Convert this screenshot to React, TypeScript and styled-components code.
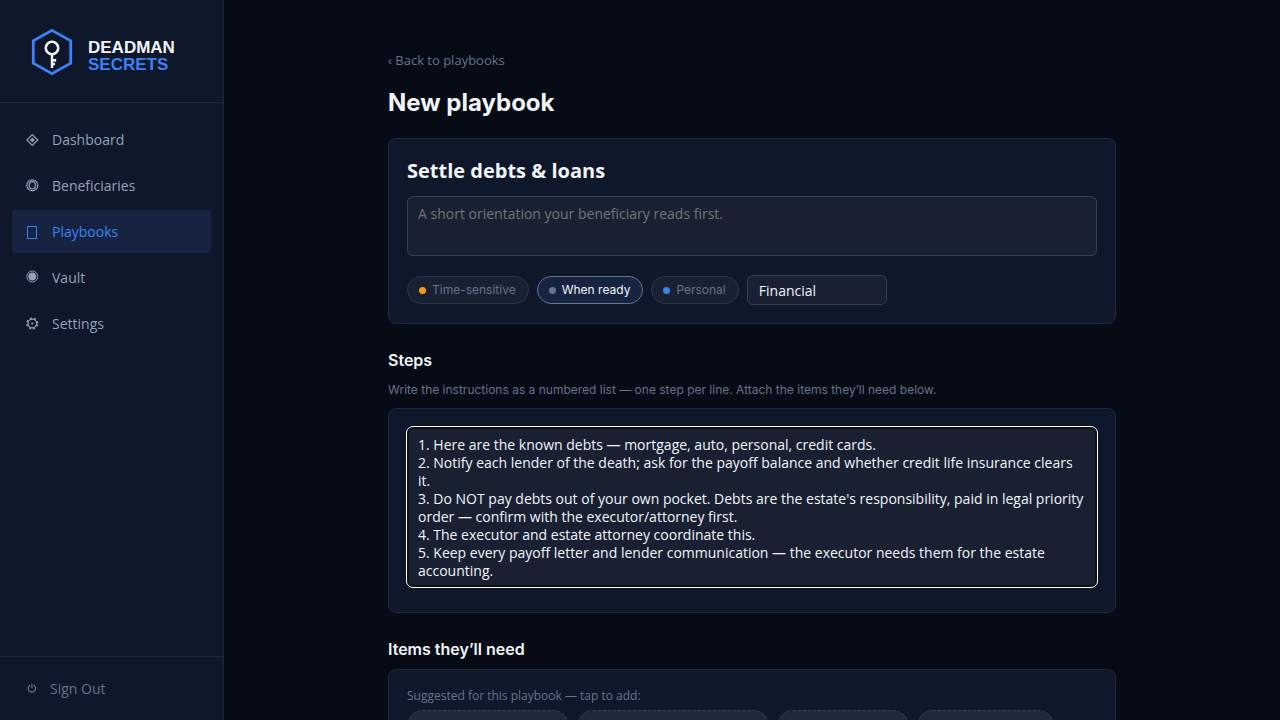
import React, { useState } from "react";
import styled, { createGlobalStyle } from "styled-components";

const color = {
  page: "#070b15",
  panel: "#0f172a",
  field: "#182032",
  line: "#1e293b",
  fieldLine: "#334155",
  text: "#f1f5f9",
  soft: "#94a3b8",
  muted: "#64748b",
  accent: "#3b82f6",
  active: "#162442",
};

const textFont = `"Open Sans", "Noto Sans", sans-serif`;
const uiFont = `Inter, "Open Sans", sans-serif`;

const GlobalStyle = createGlobalStyle`
  *, *::before, *::after { box-sizing: border-box; }
  body {
    margin: 0;
    background: ${color.page};
    color: ${color.text};
    font: 14px/18px ${textFont};
  }
  button, input, textarea { font: inherit; color: inherit; }
`;

const Shell = styled.div`
  display: grid;
  grid-template-columns: 224px minmax(0, 1fr);
  min-height: 100vh;
`;

const Sidebar = styled.aside`
  position: sticky;
  top: 0;
  display: flex;
  flex-direction: column;
  height: 100vh;
  background: ${color.panel};
  border-right: 1px solid ${color.line};
`;

const Brand = styled.a`
  display: flex;
  align-items: center;
  gap: 12px;
  padding: 25px 28px 23px;
  height: 103px;
  border-bottom: 1px solid ${color.line};
  text-decoration: none;
`;

const BrandName = styled.span`
  display: flex;
  flex-direction: column;
  padding-top: 7px;
  font: bold 17px/17px "Liberation Sans", Arial, sans-serif;
  color: ${color.text};
`;

const BrandAccent = styled.span`
  color: ${color.accent};
`;

const Nav = styled.nav`
  display: flex;
  flex: 1;
  flex-direction: column;
  gap: 3px;
  padding: 15px 12px;
`;

const NavLink = styled.a<{ $active?: boolean }>`
  display: flex;
  align-items: center;
  gap: 12px;
  height: 43px;
  padding: 0 12px;
  border-radius: 4px;
  font-weight: 500;
  text-decoration: none;
  color: ${(p) => (p.$active ? color.accent : color.soft)};
  background: ${(p) => (p.$active ? color.active : "transparent")};
`;

const Glyph = styled.svg`
  flex: none;
  width: 16px;
  height: 16px;
  fill: none;
  stroke: currentColor;
`;

const SidebarFooter = styled.div`
  padding: 10px 12px;
  border-top: 1px solid ${color.line};
`;

const SignOut = styled.button`
  display: flex;
  align-items: center;
  gap: 10px;
  width: 100%;
  height: 43px;
  padding: 0 12px;
  border: 0;
  background: none;
  color: ${color.muted};
  cursor: pointer;
`;

const Main = styled.main`
  padding: 51px 24px 48px;
`;

const Column = styled.div`
  max-width: 728px;
  margin: 0 auto;
`;

const BackLink = styled.a`
  display: block;
  width: fit-content;
  font-size: 13px;
  color: ${color.muted};
  text-decoration: none;
`;

const PageTitle = styled.h1`
  margin: 18px 0 19px;
  font: 700 24px/32px ${uiFont};
`;

const Card = styled.section`
  padding: 18px;
  border: 1px solid ${color.line};
  border-radius: 8px;
  background: ${color.panel};
`;

const NameInput = styled.input`
  display: block;
  width: 100%;
  height: 28px;
  margin-bottom: 11px;
  padding: 0;
  border: 0;
  outline: 0;
  background: none;
  font-size: 20px;
  line-height: 28px;
  font-weight: 700;
`;

const TextArea = styled.textarea`
  display: block;
  width: 100%;
  height: 60px;
  margin-bottom: 7px;
  padding: 8px 10px;
  border: 1px solid ${color.fieldLine};
  border-radius: 6px;
  outline: 0;
  background: ${color.field};
  line-height: 18px;
  resize: none;
  overflow: hidden;
  &::placeholder { color: #757575; }
`;

const StepsArea = styled(TextArea)`
  height: 160px;
  border-color: #101010;
  outline: 1px solid #fff;
  box-shadow: inset 0 0 0 1px #101010;
`;

const Options = styled.div`
  display: flex;
  flex-wrap: wrap;
  align-items: center;
  gap: 8px;
  margin-top: 19px;
`;

const Pill = styled.button<{ $on: boolean }>`
  display: flex;
  align-items: center;
  gap: 6px;
  height: 28px;
  padding: 0 12px 0 11px;
  border: 1px solid ${(p) => (p.$on ? color.muted : "#2a384c")};
  border-radius: 14px;
  background: ${(p) => (p.$on ? color.active : color.field)};
  color: ${(p) => (p.$on ? color.text : color.muted)};
  font: 12px/16px ${uiFont};
  cursor: pointer;
`;

const Dot = styled.span<{ $color: string }>`
  width: 7px;
  height: 7px;
  border-radius: 50%;
  background: ${(p) => p.$color};
`;

const CategoryInput = styled.input`
  width: 140px;
  height: 30px;
  padding: 0 11px;
  border: 1px solid ${color.fieldLine};
  border-radius: 6px;
  background: ${color.field};
`;

const SectionTitle = styled.h2`
  margin: 25px 0 9px;
  font: 600 16px/22px ${uiFont};
`;

const Help = styled.p`
  margin: 0 0 8px;
  font: 12px/20px ${uiFont};
  color: ${color.muted};
`;

const Hint = styled.p`
  margin: 0 0 6px;
  font: 12px/16px ${textFont};
  color: ${color.muted};
`;

const Suggestions = styled.div`
  display: flex;
  flex-wrap: wrap;
  gap: 8px;
`;

const Suggestion = styled.button`
  height: 32px;
  padding: 0 12px;
  border: 1px dashed ${color.fieldLine};
  border-radius: 16px;
  background: ${color.line};
  color: ${color.soft};
  font: 12px/16px ${uiFont};
  cursor: pointer;
`;

const icons = {
  diamond: (
    <>
      <path d="M8.3 2.6 13.7 8 8.3 13.4 2.9 8Z" strokeWidth="1.2" />
      <path d="M8.3 5.5 10.8 8 8.3 10.5 5.8 8Z" fill="currentColor" stroke="none" />
    </>
  ),
  rings: (
    <>
      <circle cx="8.3" cy="7.3" r="5.5" strokeWidth="1.2" />
      <ellipse cx="8.3" cy="7.3" rx="3.1" ry="3.7" strokeWidth="1.2" />
    </>
  ),
  sheet: <path d="M3.5 2.5h9v12h-9Z" />,
  disc: (
    <>
      <circle cx="8.3" cy="6.5" r="5.5" />
      <circle cx="8.3" cy="6.5" r="3.9" fill="currentColor" stroke="none" />
    </>
  ),
  gear: (
    <>
      <circle cx="8.3" cy="7.5" r="4.3" strokeWidth="1.2" />
      <circle cx="8.3" cy="7.5" r="5.4" strokeWidth="1.5" strokeDasharray="1.9 2.34" strokeDashoffset="-1.17" />
      <circle cx="8.3" cy="7.5" r="1.1" fill="currentColor" stroke="none" />
    </>
  ),
  power: (
    <path d="M6 4.2A3.7 3.7 0 1 0 9.8 4.2M7.9 2.8V7.3" strokeWidth="1.2" />
  ),
};

function Icon({ name }: { name: keyof typeof icons }) {
  return (
    <Glyph viewBox="0 0 16 16" aria-hidden="true">
      {icons[name]}
    </Glyph>
  );
}

const links: { label: string; icon: keyof typeof icons; active?: boolean }[] = [
  { label: "Dashboard", icon: "diamond" },
  { label: "Beneficiaries", icon: "rings" },
  { label: "Playbooks", icon: "sheet", active: true },
  { label: "Vault", icon: "disc" },
  { label: "Settings", icon: "gear" },
];

const timings = [
  { label: "Time-sensitive", dot: "#f59e0b" },
  { label: "When ready", dot: "#64748b" },
  { label: "Personal", dot: "#3b82f6" },
];

const suggestions = [
  "Mortgage bills and login",
  "Other loans, payoff letter (all)",
  "Credit card issuers",
  "Executor’s contacts",
];

const steps = `1. Here are the known debts — mortgage, auto, personal, credit cards.
2. Notify each lender of the death; ask for the payoff balance and whether credit life insurance clears it.
3. Do NOT pay debts out of your own pocket. Debts are the estate's responsibility, paid in legal priority order — confirm with the executor/attorney first.
4. The executor and estate attorney coordinate this.
5. Keep every payoff letter and lender communication — the executor needs them for the estate accounting.`;

function Logo() {
  return (
    <svg width="48" height="48" viewBox="0 0 48 48" fill="none" aria-hidden="true">
      <path d="M24 2.4 42.7 12.9V35.1L24 45.6 5.3 35.1V12.9Z" stroke="#3b82f6" strokeWidth="2.8" />
      <circle cx="24" cy="20" r="6.2" stroke="#f1f5f9" strokeWidth="2.6" />
      <path d="M24 26.5V40M24 32.2h4.2M24 36h3" stroke="#f1f5f9" strokeWidth="2.4" />
      <path d="M27.4 31v2.4" stroke="#f1f5f9" strokeWidth="1" />
    </svg>
  );
}

export default function App() {
  const [timing, setTiming] = useState("When ready");
  return (
    <>
      <GlobalStyle />
      <Shell>
        <Sidebar>
          <Brand href="#home">
            <Logo />
            <BrandName>
              <span>DEADMAN</span>
              <BrandAccent>SECRETS</BrandAccent>
            </BrandName>
          </Brand>
          <Nav>
            {links.map((l) => (
              <NavLink key={l.label} href={`#${l.label.toLowerCase()}`} $active={l.active}>
                <Icon name={l.icon} />
                {l.label}
              </NavLink>
            ))}
          </Nav>
          <SidebarFooter>
            <SignOut type="button">
              <Icon name="power" />
              Sign Out
            </SignOut>
          </SidebarFooter>
        </Sidebar>
        <Main>
          <Column>
            <BackLink href="#playbooks">‹ Back to playbooks</BackLink>
            <PageTitle>New playbook</PageTitle>
            <Card>
              <NameInput aria-label="Playbook name" defaultValue="Settle debts & loans" />
              <TextArea
                aria-label="Introduction"
                placeholder="A short orientation your beneficiary reads first."
              />
              <Options>
                {timings.map((t) => (
                  <Pill
                    key={t.label}
                    type="button"
                    $on={t.label === timing}
                    aria-pressed={t.label === timing}
                    onClick={() => setTiming(t.label)}
                  >
                    <Dot $color={t.dot} />
                    {t.label}
                  </Pill>
                ))}
                <CategoryInput aria-label="Category" defaultValue="Financial" />
              </Options>
            </Card>

            <SectionTitle id="steps">Steps</SectionTitle>
            <Help>
              Write the instructions as a numbered list — one step per line. Attach the items they’ll
              need below.
            </Help>
            <Card>
              <StepsArea aria-labelledby="steps" defaultValue={steps} />
            </Card>

            <SectionTitle>Items they’ll need</SectionTitle>
            <Card>
              <Hint>Suggested for this playbook — tap to add:</Hint>
              <Suggestions>
                {suggestions.map((s) => (
                  <Suggestion key={s} type="button">
                    {s}
                  </Suggestion>
                ))}
              </Suggestions>
            </Card>
          </Column>
        </Main>
      </Shell>
    </>
  );
}
